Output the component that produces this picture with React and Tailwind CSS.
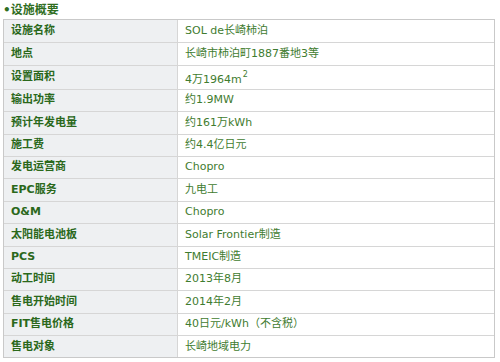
import React from "react";

const rows = [
  ["设施名称", "SOL de长崎柿泊"],
  ["地点", "长崎市柿泊町1887番地3等"],
  ["设置面积", "area"],
  ["输出功率", "约1.9MW"],
  ["预计年发电量", "约161万kWh"],
  ["施工费", "约4.4亿日元"],
  ["发电运营商", "Chopro"],
  ["EPC服务", "九电工"],
  ["O&M", "Chopro"],
  ["太阳能电池板", "Solar Frontier制造"],
  ["PCS", "TMEIC制造"],
  ["动工时间", "2013年8月"],
  ["售电开始时间", "2014年2月"],
  ["FIT售电价格", "40日元/kWh（不含税）"],
  ["售电对象", "长崎地域电力"],
];

function App() {
  return (
    <div
      className="w-[500px] h-[362px] bg-white overflow-hidden"
      style={{ fontFamily: '"DejaVu Sans", "Noto Sans CJK SC", sans-serif' }}
    >
      <div className="h-[19px] pl-[3px] pt-[3px] text-[12px] leading-[14px] font-bold text-[#2f6e1f]">
        •设施概要
      </div>
      <div className="ml-[3px] w-[492px] border border-[#c9c9c9]">
        {rows.map(([label, value], i) => (
          <div
            key={label}
            className={
              "flex " +
              (i === 2 ? "h-[24px] " : "h-[22.4px] ") +
              (i > 0 ? "border-t border-[#d6d6d6]" : "")
            }
          >
            <div className="w-[174px] shrink-0 bg-[#eef0f2] border-r border-[#d6d6d6] pl-[7px] flex items-center text-[11px] font-bold text-[#2a681b]">
              {label}
            </div>
            <div className="flex-1 pl-[7px] flex items-center text-[11px] text-[#3f7c30]">
              {value === "area" ? (
                <span className="pt-[4px] leading-none">
                  4万1964m
                  <span className="text-[8px] relative -top-[6px] ml-[1px]">2</span>
                </span>
              ) : (
                value
              )}
            </div>
          </div>
        ))}
      </div>
    </div>
  );
}

export default App;
